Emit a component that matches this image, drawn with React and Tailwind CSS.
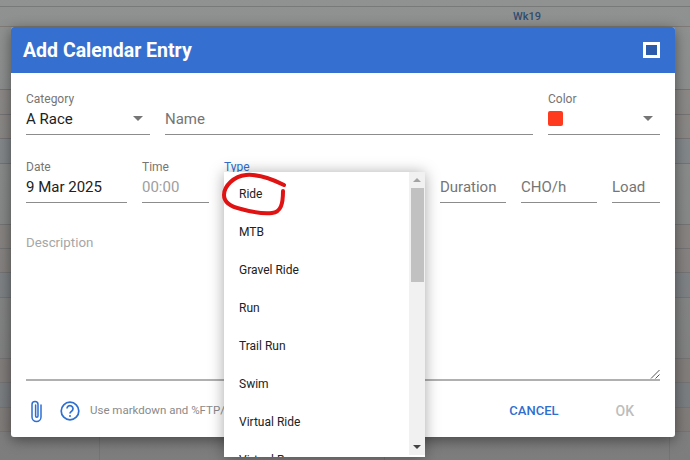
const MENU_ITEMS = ['Ride', 'MTB', 'Gravel Ride', 'Run', 'Trail Run', 'Swim', 'Virtual Ride', 'Virtual Run'];

// calendar rows behind the dialog, only their edges show
const ROWS = [
  ['h-[63px]', ''],
  ['h-[25px]', 'bg-[#8a685a22]'],
  ['h-[24px]', 'bg-[#8a685a22]'],
  ['h-[25px]', 'bg-[#5a708a22]'],
  ['h-[61px]', ''],
  ['h-[24px]', 'bg-[#8a685a22]'],
  ['h-[24px]', 'bg-[#8a685a22]'],
  ['h-[25px]', 'bg-[#5a708a22]'],
  ['h-[61px]', ''],
  ['h-[24px]', 'bg-[#8a685a22]'],
  ['h-[25px]', 'bg-[#5a708a22]'],
  ['h-[24px]', 'bg-[#8a685a22]'],
];

function Caret() {
  return <span className="w-0 h-0 border-x-[5px] border-x-transparent border-t-[5px] border-t-[#757575]" />;
}

function Field({ label, value, muted, caret, className, active, placeholder }) {
  const textColor = placeholder ? 'text-[#757575]' : muted ? 'text-[#9e9e9e]' : 'text-[#212121]';
  return (
    <div className={`flex flex-col ${className}`}>
      <div className={`h-[14px] text-[12px] leading-[14px] ${active ? 'text-[#2f6fd0]' : 'text-[#757575]'}`}>{label}</div>
      <div className="h-[29px] flex items-center justify-between border-b border-[#8c8c8c] pb-[3px]">
        <span className={`text-[15px] leading-[22px] ${textColor}`}>{value}</span>
        {caret && <span className="mr-[7px] flex"><Caret /></span>}
      </div>
    </div>
  );
}

export default function App() {
  return (
    <div className="relative w-[690px] h-[460px] overflow-hidden bg-[#858787] font-['Roboto',sans-serif]">
      {/* dimmed calendar behind the dialog */}
      <div className="flex flex-col h-full bg-gradient-to-b from-[#909292] to-[#7d7d7d]">
        <div className="h-[7px] border-b border-[#787a7a]" />
        <div className="h-[20px] border-b border-[#7f7a76] flex justify-end pr-[149px] text-[11px] leading-[20px] font-medium text-[#2f4d70]">Wk19</div>
        {ROWS.map(([height, tint], i) => (
          <div key={i} className={`${height} ${tint} border-b border-[#747474]`} />
        ))}
        <div className="flex-1 flex">
          <div className="w-[100px] border-r border-[#747474]" />
          <div className="w-[285px] border-r border-[#747474]" />
          <div className="w-[285px] border-r border-[#747474]" />
        </div>
      </div>

      {/* dialog */}
      <div className="absolute left-[11px] top-[27px] w-[664px] h-[410px] bg-white rounded-[3px] shadow-[0_3px_14px_rgba(0,0,0,0.45)] flex flex-col">
        <div className="h-[46px] shrink-0 bg-[#3570d0] rounded-t-[3px] flex items-center justify-between pl-[12px] pr-[15px]">
          <span className="text-[19.5px] font-bold text-white pt-[1px]">Add Calendar Entry</span>
          <span className="w-[17px] h-[16px] border-[3px] border-white bg-[#2a5cab]" />
        </div>
        <div className="flex-1 flex flex-col px-[15px] pt-[19px]">
          <div className="flex gap-[15px]">
            <Field label="Category" value="A Race" caret className="w-[124px]" />
            <Field label="" value="Name" placeholder className="flex-1" />
            <div className="w-[112px] flex flex-col">
              <div className="h-[14px] text-[12px] leading-[14px] text-[#757575]">Color</div>
              <div className="h-[29px] flex items-center justify-between border-b border-[#8c8c8c] pb-[3px]">
                <span className="w-[15px] h-[15px] rounded-[2px] bg-[#ff3b1f]" />
                <span className="mr-[7px] flex"><Caret /></span>
              </div>
            </div>
          </div>
          <div className="flex gap-[15px] mt-[25px]">
            <Field label="Date" value="9 Mar 2025" className="w-[101px]" />
            <Field label="Time" value="00:00" muted className="w-[67px]" />
            <Field label="Type" value="" active className="w-[201px]" />
            <Field label="" value="Duration" placeholder className="w-[66px]" />
            <Field label="" value="CHO/h" placeholder className="w-[76px]" />
            <Field label="" value="Load" placeholder className="w-[48px]" />
          </div>
          <div className="relative mt-[30px] h-[148px] border-b-2 border-[#b0b0b0] text-[13.3px] leading-[20px] text-[#a6a6a6]">
            Description
            <svg className="absolute right-0 bottom-0" width="10" height="10" viewBox="0 0 10 10">
              <path d="M1 9.5 9.5 1M5.5 9.5 9.5 5.5" stroke="#555" strokeWidth="1" fill="none" />
            </svg>
          </div>
          <div className="flex-1 flex items-center pt-[4px]">
            <svg className="ml-[1px]" width="20" height="24" viewBox="0 0 20 24" fill="none" stroke="#2f6fd0" strokeWidth="1.5" strokeLinecap="round">
              <path d="M14 6v12a4.5 4.5 0 0 1-9 0V5.5a3 3 0 0 1 6 0V17a1.2 1.2 0 0 1-2.4 0V6" />
            </svg>
            <svg className="ml-[12px]" width="22" height="22" viewBox="0 0 22 22" fill="none" stroke="#2f6fd0">
              <circle cx="11" cy="11" r="8.8" strokeWidth="1.7" />
              <path d="M8 8.6a3 3 0 1 1 4.8 2.4c-1 .7-1.8 1.2-1.8 2.6" strokeWidth="1.7" />
              <circle cx="11" cy="16" r="1" fill="#2f6fd0" stroke="none" />
            </svg>
            <span className="ml-[9px] text-[11.5px] text-[#8a8a8a] whitespace-nowrap">Use markdown and %FTP/</span>
            <div className="ml-auto flex items-center gap-[57px] pr-[26px] text-[13px] font-medium">
              <span className="text-[#2f6fd0]">CANCEL</span>
              <span className="text-[14px] text-[#bdbdbd]">OK</span>
            </div>
          </div>
        </div>
      </div>

      {/* type dropdown */}
      <div className="absolute left-[224px] top-[172px] w-[201px] h-[285px] bg-white shadow-[0_1px_14px_rgba(0,0,0,0.35)] flex overflow-hidden">
        <div className="flex-1 flex flex-col overflow-hidden pt-[3px]">
          {MENU_ITEMS.map((item) => (
            <div key={item} className="h-[38px] shrink-0 flex items-center pl-[15px] text-[12px] text-[#212121]">{item}</div>
          ))}
        </div>
        <div className="w-[16px] mb-[2px] bg-[#f1f1f1] flex flex-col items-center">
          <div className="h-[16px] flex items-center"><span className="w-0 h-0 border-x-[4px] border-x-transparent border-b-[4px] border-b-[#a3a3a3]" /></div>
          <div className="w-[13px] h-[94px] bg-[#c1c1c1]" />
          <div className="mt-auto h-[16px] flex items-center"><span className="w-0 h-0 border-x-[4px] border-x-transparent border-t-[4px] border-t-[#444]" /></div>
        </div>
      </div>

      {/* red hand-drawn circle */}
      <svg className="absolute left-0 top-0 pointer-events-none" width="690" height="460" viewBox="0 0 690 460" fill="none">
        <path d="M284 185C272 179 258 174 246 175C234 176 224 186 224 195C224 203 232 207 241 209C252 212 264 214 272 213C281 212 283 204 283 191" stroke="#e01212" strokeWidth="4" strokeLinecap="round" />
      </svg>
    </div>
  );
}
